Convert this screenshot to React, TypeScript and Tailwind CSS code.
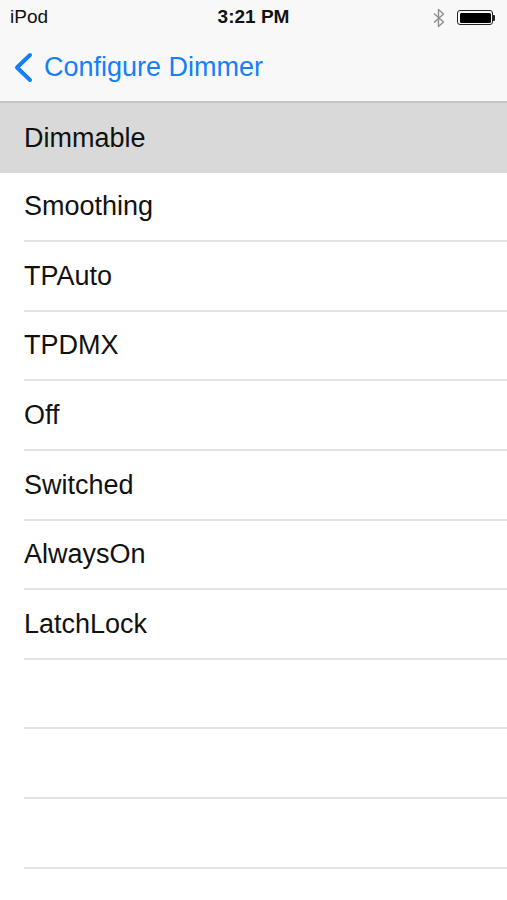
import React from 'react';

const items = ['Dimmable', 'Smoothing', 'TPAuto', 'TPDMX', 'Off', 'Switched', 'AlwaysOn', 'LatchLock', '', '', ''];

function Bluetooth() {
  return (
    <svg width="12" height="20" viewBox="0 0 12 20" fill="none" stroke="#8e8e8e" strokeWidth="1.4" strokeLinejoin="round">
      <path d="M1 5.5 L10.5 14 L5.5 18.5 V1.5 L10.5 6 L1 14.5" />
    </svg>
  );
}

function Battery() {
  return (
    <div className="flex items-center">
      <div className="w-[36px] h-[15px] rounded-[3px] border-[1.5px] border-[#222] p-[1.5px]">
        <div className="w-full h-full rounded-[1.5px] bg-black" />
      </div>
      <div className="w-[2px] h-[6px] bg-[#222] rounded-r-[1px]" />
    </div>
  );
}

export default function App() {
  return (
    <div className="w-[507px] h-[900px] bg-white overflow-hidden" style={{ fontFamily: '"Liberation Sans", Arial, sans-serif' }}>
      {/* Status + nav bar */}
      <div className="bg-[#f8f8f8] border-b-2 border-[#c4c4c4]">
        <div className="h-[33px] pt-[2px] flex items-center justify-between px-[10px] relative">
          <span className="text-[19px] text-[#111]">iPod</span>
          <span className="absolute left-1/2 -translate-x-1/2 text-[19px] font-bold text-[#111]">3:21 PM</span>
          <div className="flex items-center gap-[12px] pr-[2px]">
            <Bluetooth />
            <Battery />
          </div>
        </div>
        <div className="h-[68px] flex items-center pl-[13px]">
          <svg width="20" height="31" viewBox="0 0 20 31" fill="none" stroke="#157efb" strokeWidth="4" strokeLinecap="round" strokeLinejoin="round">
            <path d="M17 3 L4 15.5 L17 28" />
          </svg>
          <span className="ml-[11px] text-[27px] text-[#157efb]">Configure Dimmer</span>
        </div>
      </div>

      {/* List */}
      <div className="flex flex-col">
        {items.map((label, i) => (
          <div key={i} className={i === 0 ? 'bg-[#d9d9d9]' : 'bg-white'}>
            <div className={`h-[69.6px] ml-[24px] flex items-center text-[27px] text-[#111] ${i === 0 ? '' : 'border-b-2 border-[#e3e3e3]'}`}>
              {label}
            </div>
          </div>
        ))}
      </div>
    </div>
  );
}
